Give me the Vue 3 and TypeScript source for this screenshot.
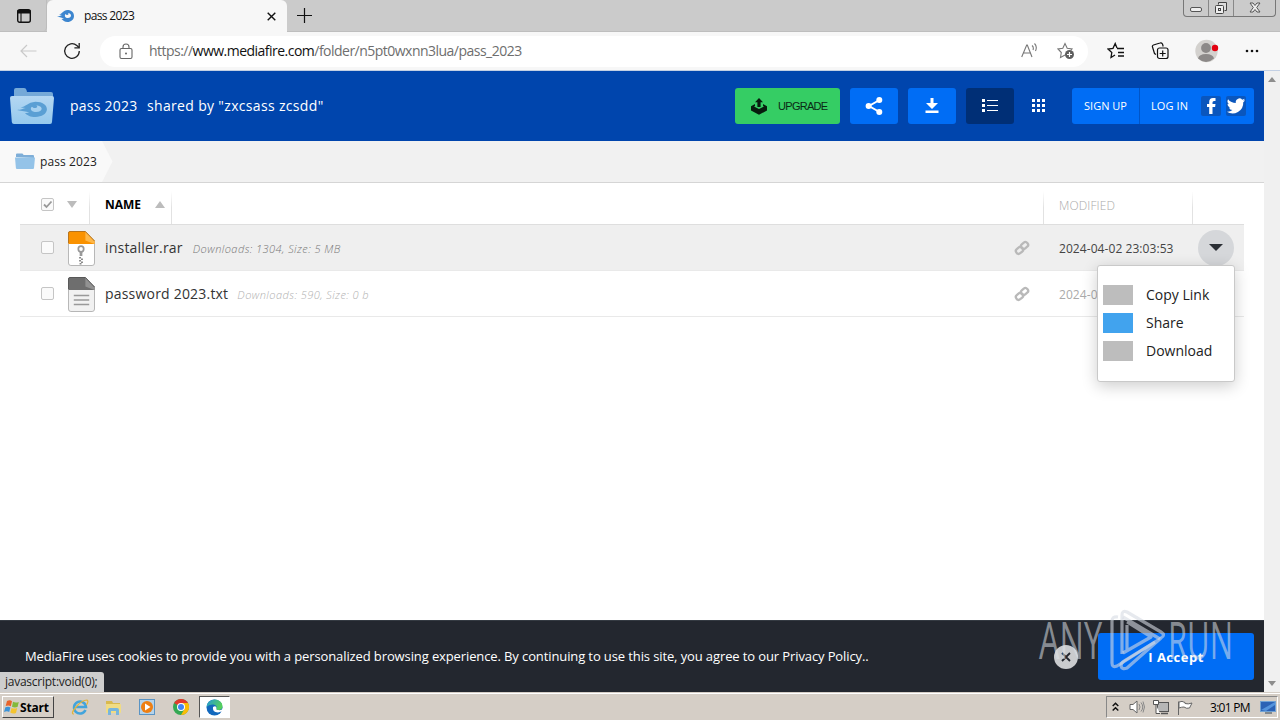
<script setup lang="ts">
interface FileRow {
  name: string
  meta: string
  modified: string
  kind: 'rar' | 'txt'
  active: boolean
}

interface MenuEntry {
  label: string
  highlighted: boolean
}

const files: FileRow[] = [
  { name: 'installer.rar', meta: 'Downloads: 1304, Size: 5 MB', modified: '2024-04-02 23:03:53', kind: 'rar', active: true },
  { name: 'password 2023.txt', meta: 'Downloads: 590, Size: 0 b', modified: '2024-0', kind: 'txt', active: false },
]

const menu: MenuEntry[] = [
  { label: 'Copy Link', highlighted: false },
  { label: 'Share', highlighted: true },
  { label: 'Download', highlighted: false },
]
</script>

<template>
  <div class="screen">
    <div class="tabstrip">
      <div class="tab-actions">
        <svg width="16" height="16" viewBox="0 0 16 16"><rect x="1.7" y="1.7" width="12.6" height="12.6" rx="2" fill="none" stroke="#111" stroke-width="1.4" /><path d="M1.5 2h13v3.5h-13z" fill="#111" /><path d="M5 5v9" stroke="#111" stroke-width="1.1" /></svg>
      </div>
      <div class="tab">
        <svg class="tab-logo" width="17" height="14" viewBox="0 0 34 26"><path fill="#3d86cf" fill-rule="evenodd" d="M0 14C5 14 6 12 10 11L4 10C10 9 12 2 21 1C29 1 34 6 34 13C34 20 28 25 21 25C15 25 12 22 9 19L14 18C10 16 6 16 0 14ZM17 9C15 11 15 16 20 17C25 18 28 15 28 12C28 9 25 7 22 7C24 9 23 11 20 11C19 11 18 10 17 9Z" /></svg>
        <span class="tab-title">pass 2023</span>
        <svg class="tab-close" width="9" height="9" viewBox="0 0 9 9"><path d="M.7.7l7.6 7.6M8.3.7L.7 8.3" stroke="#111" stroke-width="1.4" /></svg>
      </div>
      <svg class="new-tab" width="15" height="15" viewBox="0 0 15 15"><path d="M7.5 0v15M0 7.5h15" stroke="#111" stroke-width="1.2" /></svg>
      <div class="window-buttons">
        <span class="wb"><svg width="12" height="12"><rect x=".5" y="5.5" width="11" height="4" rx="1.5" fill="#eee" stroke="#555" /></svg></span>
        <span class="wb"><svg width="14" height="14"><path d="M4.500 3.500V1.500h8v8h-2" fill="#ddd" stroke="#444" /><rect x="1.500" y="4.500" width="8" height="8" rx="1" fill="#eee" stroke="#444" /><rect x="4.500" y="7.500" width="2" height="2" fill="none" stroke="#444" /></svg></span>
        <span class="wb wide"><svg width="12" height="12"><path d="M1 1h3l2 2.500L8 1h3L7.700 5.500 11 10H8L6 7.500 4 10H1l3.300-4.500z" fill="#eee" stroke="#555" /></svg></span>
      </div>
    </div>

    <div class="toolbar">
      <svg class="back" width="17" height="14" viewBox="0 0 17 14"><path d="M16.500 7H1M7 1L1 7l6 6" fill="none" stroke="#c9c9c9" stroke-width="1.200" /></svg>
      <svg class="reload" width="18" height="18" viewBox="0 0 18 18"><path d="M16.300 9a7.300 7.300 0 1 1-2.500-5.500L16 5.500" fill="none" stroke="#222" stroke-width="1.300" /><path d="M16.200 1v4.800h-4.800" fill="none" stroke="#222" stroke-width="1.300" /></svg>
      <div class="address">
        <svg class="lock" width="14" height="17" viewBox="0 0 14 17"><rect x="1" y="5.500" width="12" height="10" rx="1.500" fill="none" stroke="#666" stroke-width="1.100" /><path d="M4 5.500V4a3 3 0 0 1 6 0v1.500" fill="none" stroke="#666" stroke-width="1.100" /><circle cx="7" cy="10.500" r="1" fill="#666" /></svg>
        <span class="url">https://<b>www.mediafire.com</b>/folder/n5pt0wxnn3lua/pass_2023</span>
        <svg class="read" width="17" height="16" viewBox="0 0 17 16"><path d="M.700 14L5.700 2h.600L11 14M2.500 10h7M11 2.500q2 1.500 1 4.500M13.500.500q3 3 1 7.500" fill="none" stroke="#777" stroke-width="1.100" /></svg>
        <svg class="star" width="18" height="18" viewBox="0 0 18 18"><path d="M8 13l-4.500 2.500.800-5L1 7l4.800-.700L8 1.500l2.200 4.800L15 7l-1 1.200" fill="none" stroke="#777" stroke-width="1.100" /><circle cx="12.500" cy="12.500" r="4.500" fill="#5d5d5d" /><path d="M12.500 10v5M10 12.500h5" stroke="#fff" stroke-width="1.200" /></svg>
      </div>
      <svg class="fav" width="18" height="18" viewBox="0 0 18 18"><path d="M8 13l-4 2.500.800-5L1 7l5-.700L8.200 1.500 10 6M10 6.500h7M11 10.500h6M11 14h6" fill="none" stroke="#111" stroke-width="1.300" /></svg>
      <svg class="coll" width="18" height="18" viewBox="0 0 18 18"><path d="M5 12.500l-1.500-1L1.500 5q-.500-1.500 1-2L9 1q1.500-.500 2.500 1l.700 2.500" fill="none" stroke="#111" stroke-width="1.200" /><rect x="6.500" y="6" width="10.500" height="10.500" rx="2" fill="#f7f7f7" stroke="#111" stroke-width="1.200" /><path d="M11.700 8.500v6M8.700 11.500h6" stroke="#111" stroke-width="1.200" /></svg>
      <svg class="avatar" width="24" height="24" viewBox="0 0 24 24"><circle cx="11.500" cy="12" r="11.200" fill="#d3d1ce" /><circle cx="11" cy="9" r="4.900" fill="#8c8988" /><path d="M3 19.500Q4 15 11 15t8 4.500Q15 23 11 23T3 19.500z" fill="#8c8988" /><circle cx="20" cy="9" r="3.200" fill="#e3000f" /></svg>
      <svg class="dots" width="14" height="4"><circle cx="2" cy="2" r="1.300" fill="#111" /><circle cx="7" cy="2" r="1.300" fill="#111" /><circle cx="12" cy="2" r="1.300" fill="#111" /></svg>
    </div>

    <div class="viewport">
      <div class="page">
        <header class="header">
          <svg class="brand" width="46" height="38" viewBox="0 0 46 38">
            <defs><linearGradient id="folderFront" x1="0" y1="0" x2="0" y2="1"><stop offset="0" stop-color="#b4d7f2" /><stop offset="1" stop-color="#95c9ed" /></linearGradient></defs>
            <path d="M5 10V3q0-2 2-2h8q2 0 2.500 2l.500 2h24q2 0 2 2v3z" fill="#75a9d8" />
            <path d="M3 9h40q2 0 2 2l-2 24q0 2-2 2H5q-2 0-2.200-2L1 11q0-2 2-2z" fill="url(#folderFront)" />
            <path transform="translate(8 14) scale(.88 .64)" fill="#5a9fd4" fill-rule="evenodd" d="M0 14C5 14 6 12 10 11L4 10C10 9 12 2 21 1C29 1 34 6 34 13C34 20 28 25 21 25C15 25 12 22 9 19L14 18C10 16 6 16 0 14ZM17 9C15 11 15 16 20 17C25 18 28 15 28 12C28 9 25 7 22 7C24 9 23 11 20 11C19 11 18 10 17 9Z" />
          </svg>
          <span class="folder-name">pass 2023</span>
          <span class="shared-by">shared by "zxcsass zcsdd"</span>
          <div class="header-actions">
            <button class="upgrade">
              <svg width="18" height="17" viewBox="0 0 18 17"><path d="M9 0l4 4.200h-2.400V9H7.400V4.200H5z" fill="#071c0e" /><path d="M1 8.200l4-2.200v2L4 8.600 9 11l5-2.400-1-.600V6l4 2.200v4.300L9 16.800 1 12.500z" fill="#071c0e" /></svg>
              <span>UPGRADE</span>
            </button>
            <button class="square"><svg width="18" height="20" viewBox="0 0 18 20"><path d="M14.500 4L4 10l10.500 6" fill="none" stroke="#fff" stroke-width="2" /><circle cx="14.300" cy="4" r="3" fill="#fff" /><circle cx="3.600" cy="10" r="3" fill="#fff" /><circle cx="14.300" cy="16" r="3" fill="#fff" /></svg></button>
            <button class="square"><svg width="14" height="16" viewBox="0 0 14 16"><path d="M5.500 0h3v5H13L7 11 1 5h4.500zM.500 12.500h13V15H.500z" fill="#fff" /></svg></button>
            <button class="square selected"><svg width="16" height="14" viewBox="0 0 16 14"><path d="M0 0h3v3H0zM0 5h3v3H0zM0 10h3v3H0zM5 1h11v1H5zM5 6h11v1H5zM5 11h11v1H5z" fill="#fff" /></svg></button>
            <button class="square plain"><svg width="14" height="14" viewBox="0 0 14 14"><path d="M0 0h3v3H0zM5 0h3v3H5zM10 0h3v3h-3zM0 5h3v3H0zM5 5h3v3H5zM10 5h3v3h-3zM0 10h3v3H0zM5 10h3v3H5zM10 10h3v3h-3z" fill="#fff" /></svg></button>
            <div class="account">
              <span class="signup">SIGN UP</span>
              <span class="login">LOG IN</span>
              <span class="social"><svg width="20" height="20" viewBox="0 0 20 20"><path d="M8.200 18v-7H6V8h2.200V6Q8.200 2 12 2h2.500v3H13q-1.500 0-1.500 1.500V8h3l-.400 3h-2.600v7z" fill="#fff" /></svg></span>
              <span class="social"><svg width="20" height="20" viewBox="0 0 24 24"><path d="M23 5.100a9 9 0 0 1-2.600.700 4.500 4.500 0 0 0 2-2.500 9 9 0 0 1-2.900 1.100 4.500 4.500 0 0 0-7.700 4.100A12.800 12.800 0 0 1 2.500 3.800a4.500 4.500 0 0 0 1.400 6 4.500 4.500 0 0 1-2-.600 4.500 4.500 0 0 0 3.600 4.500 4.500 4.500 0 0 1-2 .100 4.500 4.500 0 0 0 4.200 3.100A9 9 0 0 1 1 18.800a12.800 12.800 0 0 0 19.700-11.400A9 9 0 0 0 23 5.100z" fill="#fff" /></svg></span>
            </div>
          </div>
        </header>

        <nav class="crumbs">
          <div class="crumb">
            <svg width="20" height="17" viewBox="0 0 20 17"><path d="M1 4V1.500Q1 .500 2 .500h5q1 0 1.300 1L8.500 2H18q1 0 1 1v2z" fill="#7eaed8" /><path d="M0 4.500h20L19 15q0 1-1 1H2q-1 0-1.100-1z" fill="#94c3e8" /></svg>
            <span>pass 2023</span>
          </div>
          <svg class="crumb-tip" width="13" height="41" viewBox="0 0 13 41"><path d="M0 0h1l10.500 20.500L1 41H0z" fill="#f9f9f9" /></svg>
        </nav>

        <main class="list">
          <div class="list-head">
            <div class="h-check">
              <span class="box"><svg width="11" height="11" viewBox="0 0 11 11"><path d="M2 5.500L4.500 8 9.500 2.500" fill="none" stroke="#999" stroke-width="1.800" /></svg></span>
              <svg class="down" width="10" height="7"><path d="M0 0h10L5 7z" fill="#bcbcbc" /></svg>
            </div>
            <div class="h-name"><span>NAME</span><svg width="10" height="7"><path d="M0 7h10L5 0z" fill="#bcbcbc" /></svg></div>
            <div class="h-modified">MODIFIED</div>
            <div class="h-more"></div>
          </div>
          <div v-for="file in files" :key="file.name" class="row" :class="{ active: file.active }">
            <span class="box"></span>
            <svg class="file-icon" width="27" height="35" viewBox="0 0 28 35" preserveAspectRatio="none">
              <path d="M2.500.500H18L27.500 10v22q0 2.500-2.500 2.500H3Q.500 34.500.500 32V2.500q0-2 2-2z" :fill="file.kind === 'rar' ? '#fff' : '#f1f1f1'" stroke="#b5b5b5" />
              <path d="M2 .500h16L27.500 10v3H.500V2Q.500.500 2 .500z" :fill="file.kind === 'rar' ? '#fa9200' : '#6e6e6e'" />
              <path d="M18 .500L27.500 10v3L18 9.500z" :fill="file.kind === 'rar' ? '#ffb848' : '#929292'" />
              <path d="M.500 12V2Q.500.500 2 .500h16L27.500 10" fill="none" :stroke="file.kind === 'rar' ? '#b7731b' : '#575757'" />
              <g v-if="file.kind === 'rar'">
                <circle cx="13.500" cy="18" r="2.800" fill="none" stroke="#999" stroke-width="1.800" />
                <path d="M13.500 20.500v4.500" stroke="#999" stroke-width="2.800" />
                <path d="M11.500 26h2v1.500h-2zM13.500 27.500h2V29h-2zM11.500 29h2v1.500h-2zM13.500 30.500h2V32h-2zM12 32h2v1.500h-2z" fill="#888" />
              </g>
              <path v-else d="M6 18.500h16M6 23h16M6 27.500h16" stroke="#999" stroke-width="1.500" />
            </svg>
            <span class="file-name">{{ file.name }}</span>
            <span class="file-meta" :class="file.kind">{{ file.meta }}</span>
            <svg class="link" width="16" height="16" viewBox="0 0 16 16"><g fill="none" stroke="#b9b9b9" stroke-width="2.300"><rect x="6.700" y="2.800" width="7.600" height="5.400" rx="2.500" transform="rotate(-40 10.500 5.500)" /><rect x="1.700" y="7.600" width="7.600" height="5.400" rx="2.500" transform="rotate(-40 5.500 10.300)" /></g></svg>
            <span class="date">{{ file.modified }}</span>
            <span v-if="file.active" class="more"><svg width="14" height="7"><path d="M0 0h14L7 7z" fill="#2b2f35" /></svg></span>
          </div>
        </main>

        <div class="cookie">
          <span class="cookie-text">MediaFire uses cookies to provide you with a personalized browsing experience. By continuing to use this site, you agree to our Privacy Policy..</span>
          <span class="dismiss"><svg width="10" height="10" viewBox="0 0 10 10"><path d="M1 1l8 8M9 1L1 9" stroke="#22262e" stroke-width="1.800" /></svg></span>
          <button class="accept">I Accept</button>
        </div>
      </div>
      <div class="scrollbar">
        <svg width="8" height="5"><path d="M0 5h8L4 0z" fill="#8d8d8d" /></svg>
        <svg width="8" height="5"><path d="M0 0h8L4 5z" fill="#8d8d8d" /></svg>
      </div>
    </div>

    <div class="taskbar">
      <div class="start">
        <svg width="16" height="16" viewBox="0 0 16 16"><path d="M3 2q3-1.500 5 .200L6.800 7.200Q4.500 6 1.700 7z" fill="#e8632b" /><path d="M9 2.700q2.500 1.500 5.800.200L13.500 8q-3 1-5.500-.300z" fill="#83b93c" /><path d="M1.400 8.200q3-1.200 5 .200L5.200 13Q3 11.700 0 13z" fill="#3b93d8" /><path d="M7.600 8.900q2.500 1.300 5.600.200L12 14q-3 1.200-5.700-.400z" fill="#f4c430" /></svg>
        <span>Start</span>
      </div>
      <svg class="ie" width="18" height="18" viewBox="0 0 18 18"><path d="M14.500 12A6 6 0 1 1 15 9H5" fill="none" stroke="#42a4dc" stroke-width="2.500" /><path d="M3 16Q-1 16 5 9T16 2q2 1-.500 5" fill="none" stroke="#e2b43b" stroke-width="1.200" /></svg>
      <svg class="explorer" width="17" height="17" viewBox="0 0 17 17"><path d="M1 5V2h6l1 2h7v3z" fill="#d9b94e" /><rect x="1" y="5" width="15" height="9" rx="1" fill="#f1dc83" /><path d="M3 16v-5q0-2 2-2h7q2 0 2 2v5h-3v-4H6v4z" fill="#78b5dc" /></svg>
      <svg class="player" width="16" height="16" viewBox="0 0 16 16"><rect x=".500" y=".500" width="15" height="15" fill="#b5d3ea" stroke="#5a94c4" /><circle cx="8" cy="8" r="6" fill="#ee7f13" /><path d="M6 4.500l5.500 3.500L6 11.500z" fill="#fff" /></svg>
      <svg class="chrome" width="16" height="16" viewBox="0 0 16 16"><circle cx="8" cy="8" r="8" fill="#34a853" /><path d="M8 8L1.100 4A8 8 0 0 1 15 4z" fill="#e3392c" /><path d="M8 4h7a8 8 0 0 1-7 12l3.500-6z" fill="#fbbc05" /><circle cx="8" cy="8" r="4" fill="#fff" /><circle cx="8" cy="8" r="3" fill="#4285f4" /></svg>
      <div class="edge">
        <svg width="17" height="17" viewBox="0 0 17 17"><defs><linearGradient id="edgeWave" x1="0" y1="0" x2="1" y2=".4"><stop offset="0" stop-color="#2498d8" /><stop offset="1" stop-color="#55cf5b" /></linearGradient></defs><circle cx="8.500" cy="8.500" r="8" fill="#1268bd" /><path d="M.500 8Q1 1 8.500.500 16 1 16.500 7q0 4-4 4-3 0-2-2 .500-3-3-3.500Q3 5 .500 8z" fill="url(#edgeWave)" /><path d="M7 8q-1 5 5 5.500l3.500-1L17 14v-4q-2 1.500-4.500 1-3 0-2-2Q10 6 7 8z" fill="#fff" /></svg>
      </div>
      <div class="tray">
        <svg class="chev" width="7" height="10" viewBox="0 0 7 10"><path d="M.700 4L3.500 1.300 6.300 4M.700 8.500l2.800-2.700 2.800 2.700" fill="none" stroke="#111" stroke-width="1.500" /></svg>
        <svg class="sound" width="16" height="14" viewBox="0 0 16 14"><path d="M1 4.500h3L8 1v12L4 9.500H1z" fill="#fff" stroke="#666" /><path d="M10 4q2 3 0 6M12 2.500q3.500 4.500 0 9M14 1.500q3 5.500 0 11" fill="none" stroke="#888" /></svg>
        <svg class="net" width="16" height="16" viewBox="0 0 16 16"><rect x="4.500" y="3.500" width="11" height="9" fill="#b6b6b6" stroke="#555" /><path d="M8 14.500h7" stroke="#555" stroke-width="1.500" /><path d="M.500 1.500h5v4h-5zM3 6v8.500h4" fill="#fff" stroke="#555" /></svg>
        <svg class="flag" width="16" height="15" viewBox="0 0 16 15"><path d="M1.500 15V1.500M2 2q3-1.500 6 .500v1q3 1 7-.500l-2.500 5q-3 1-5.500-1Q4.500 7 2 8z" fill="#fff" stroke="#666" /></svg>
        <span class="clock">3:01 PM</span>
        <svg class="desktop" width="16" height="14" viewBox="0 0 16 14"><rect x=".500" y="1.500" width="15" height="10" fill="#2c62b5" stroke="#71a2d4" /><path d="M1 10L15 2v3L6 11z" fill="#5594dc" /><path d="M5 13h7" stroke="#345" /></svg>
      </div>
    </div>

    <div class="context-menu">
      <div v-for="entry in menu" :key="entry.label" class="entry">
        <span class="swatch" :class="{ on: entry.highlighted }"></span>
        <span class="entry-label">{{ entry.label }}</span>
      </div>
    </div>
    <div class="status">javascript:void(0);</div>
    <svg class="watermark" width="200" height="66" viewBox="0 0 200 66">
      <g fill="#dfe3e8" fill-opacity=".55" font-family="'Open Sans', sans-serif" font-weight="400" font-size="52">
        <text x="4" y="52" textLength="63" lengthAdjust="spacingAndGlyphs">ANY</text>
        <text x="133" y="52" textLength="65" lengthAdjust="spacingAndGlyphs">RUN</text>
      </g>
      <g fill="none" stroke="#d5dae2" stroke-opacity=".6" stroke-width="3.200" stroke-linejoin="round">
        <path d="M83 10q-6-1-6 4v42q0 5 5 3l38-24" />
        <path d="M87 47V8q0-5 5-3l34 20q5 3 0 6L92 61q-5 2-6-2 0-3 3-5l34-21" />
        <path d="M88 10l37 22M92 43V18M88 46l28-16L92 15" />
      </g>
    </svg>
  </div>
</template>

<style>
html,
body {
  margin: 0;
  overflow: hidden;
}
</style>

<style scoped>
.screen {
  position: relative;
  display: flex;
  flex-direction: column;
  width: 1280px;
  height: 720px;
  overflow: hidden;
  background: #fff;
  color: #222;
  font-family: 'Open Sans', 'Noto Sans', sans-serif;
}
svg { display: block; flex: none; }
span { white-space: pre; }
button { border: 0; padding: 0; margin: 0; font-family: inherit; }

.tabstrip { display: flex; height: 32px; background: #cbcbcb; box-shadow: inset 0 -1px #bebebe; flex: none; }
.tab-actions { width: 47px; height: 31px; box-sizing: border-box; padding: 8px 0 0 16px; border-right: 1px solid #bdbdbd; border-bottom-right-radius: 4px; }
.tab { display: flex; align-items: center; width: 240px; height: 32px; background: #f7f7f7; border-radius: 6px 6px 0 0; }
.tab-logo { margin-left: 10px; }
.tab-title { margin-left: 10px; width: 183px; font-size: 12px; line-height: 30px; letter-spacing: -0.65px; color: #111; }
.new-tab { margin: 8px 0 0 10px; }
.window-buttons { display: flex; height: 16px; margin: 0 4px 0 auto; border: 1px solid #777; border-top: 0; border-radius: 0 0 4px 4px; }
.wb { display: flex; align-items: center; justify-content: center; width: 24px; }
.wb + .wb { border-left: 1px solid #888; }
.wb.wide { width: 41px; }

.toolbar { display: flex; align-items: center; height: 38px; flex: none; background: #f7f7f7; border-bottom: 1px solid #c3d0e4; }
.back { margin-left: 20px; }
.reload { margin-left: 26px; }
.address { display: flex; align-items: center; width: 988px; height: 31px; margin-left: 19px; border-radius: 16px; background: #fff; }
.lock { margin-left: 19px; }
.url { margin-left: 16px; width: 872px; font-size: 14px; line-height: 28px; letter-spacing: -0.52px; color: #6e6e6e; }
.url b { color: #111; font-weight: 400; }
.star { margin-left: 19px; }
.fav { margin-left: 19px; }
.coll { margin-left: 26px; }
.avatar { margin-left: 26px; }
.dots { margin-left: 26px; }

.viewport { display: flex; height: 621px; flex: none; }
.page { display: flex; flex-direction: column; width: 1264px; }
.scrollbar { display: flex; flex-direction: column; justify-content: space-between; align-items: center; width: 16px; padding: 6px 0; box-sizing: border-box; background: #f0f0f0; }

.header { display: flex; align-items: center; height: 70px; flex: none; background: #0045ad; color: #fff; }
.brand { margin-left: 9px; }
.folder-name { margin-left: 15px; width: 77px; padding-bottom: 2px; font-size: 14px; letter-spacing: 0.25px; }
.shared-by { padding-bottom: 2px; font-size: 14px; letter-spacing: 0.33px; }
.header-actions { display: flex; margin: 0 10px 0 auto; }
.upgrade { display: flex; align-items: center; width: 105px; height: 36px; background: #35cd64; border-radius: 3px; color: #0b2a14; font-family: 'Liberation Sans', Arial, sans-serif; font-size: 11px; letter-spacing: -0.7px; }
.upgrade svg { margin: 0 10px 0 15px; }
.square { display: flex; align-items: center; justify-content: center; width: 48px; height: 36px; margin-left: 10px; border-radius: 3px; background: #006df5; }
.square.selected { background: #002f76; }
.square.plain { margin-left: 0; padding-left: 2px; box-sizing: border-box; background: none; }
.account { display: flex; align-items: center; width: 182px; height: 36px; margin-left: 10px; border-radius: 3px; background: #006df5; font-size: 11px; }
.signup { width: 67px; line-height: 36px; text-align: center; border-right: 1px solid #0055c8; }
.login { width: 61px; padding: 0 2px 2px 0; box-sizing: border-box; text-align: center; letter-spacing: 0.1px; }
.social { width: 20px; height: 20px; background: #0a56bd; border-radius: 2px; }
.social + .social { margin-left: 5px; }

.crumbs { display: flex; height: 41px; flex: none; background: #f1f1f1; border-bottom: 1px solid #d5d5d5; }
.crumb { display: flex; align-items: center; width: 101px; background: #f9f9f9; font-size: 12px; letter-spacing: 0.1px; }
.crumb svg { margin: 0 5px 0 15px; }

.list { flex: 1; padding: 0 20px; }
.list-head { display: flex; height: 41px; border-bottom: 1px solid #dedede; font-size: 12px; }
.list-head > div { box-sizing: border-box; padding-top: 2px; background: linear-gradient(to bottom, #fff 20%, #e2e2e2 60%) right / 1px 100% no-repeat; }
.h-check { display: flex; align-items: center; width: 70px; }
.box { display: block; box-sizing: border-box; width: 13px; height: 13px; margin-left: 21px; border: 1px solid #c5c5c5; border-radius: 2px; background: #fafafa; flex: none; }
.down { margin-left: 13px; }
.h-name { display: flex; align-items: center; width: 82px; padding-left: 15px; color: #000; font-weight: 700; }
.h-name span { width: 50px; }
.list-head > .h-modified { width: 150px; margin-left: auto; padding-left: 16px; line-height: 41px; background: linear-gradient(to bottom, #fff 20%, #e2e2e2 60%) left / 1px 100% no-repeat; color: #aaa; font-weight: 300; letter-spacing: 0.1px; }
.list-head > .h-more { width: 52px; margin-left: -1px; background: linear-gradient(to bottom, #fff 20%, #e2e2e2 60%) left / 1px 100% no-repeat; }
.row { display: flex; align-items: center; height: 45px; border-bottom: 1px solid #e9e9e9; }
.row.active { background: #efefef; }
.file-icon { margin: 1px 0 0 14px; }
.file-name { margin-left: 10px; font-size: 14px; letter-spacing: 0.2px; color: #333; }
.file-meta { margin: 2px 0 0 10px; font-size: 11px; font-style: italic; font-weight: 300; letter-spacing: 0.45px; color: #b0b0b0; }
.file-meta.txt { margin-left: 9px; }
.active .file-meta { color: #777; }
.link { margin-left: auto; }
.date { width: 139px; margin-left: 29px; padding-top: 1px; font-size: 12px; letter-spacing: 0.07px; color: #aaa; margin-right: 46px; box-sizing: border-box; }
.active .date { margin-right: 0; color: #444; }
.more { display: flex; align-items: center; justify-content: center; width: 36px; height: 36px; margin-right: 10px; border-radius: 50%; background: #d5d7da; }

.cookie { display: flex; align-items: center; height: 72px; flex: none; background: #23272f; color: #fff; box-sizing: border-box; border-top: 1px solid #343a42; }
.cookie-text { width: 1029px; padding: 0 0 2px 25px; box-sizing: border-box; font-size: 13px; letter-spacing: -0.112px; }
.dismiss { display: flex; align-items: center; justify-content: center; width: 24px; height: 24px; margin-left: 25px; border-radius: 50%; background: #c9cbce; }
.accept { width: 156px; height: 47px; margin-left: 20px; border-radius: 3px; background: #006df5; color: #fff; font-size: 13px; font-weight: 700; letter-spacing: 0.5px; }

.taskbar { display: flex; align-items: center; height: 28px; flex: none; background: #d5cec6; box-shadow: inset 0 1px #d5cec6, inset 0 2px #fff; box-sizing: border-box; padding-top: 2px; }
.start { display: flex; align-items: center; box-sizing: border-box; width: 52px; height: 22px; margin-left: 2px; padding-left: 1px; border: 1px solid #fff; border-right-color: #444; border-bottom-color: #444; font-size: 12px; font-weight: 700; color: #000; letter-spacing: -0.2px; }
.ie { margin-left: 17px; }
.explorer { margin-left: 16px; }
.player { margin-left: 17px; }
.chrome { margin-left: 18px; }
.edge { display: flex; align-items: center; justify-content: center; box-sizing: border-box; width: 31px; height: 22px; margin-left: 10px; border: 1px solid #555; border-right-color: #fff; border-bottom-color: #fff; background: #fff; }
.tray { display: flex; align-items: center; box-sizing: border-box; width: 172px; height: 22px; margin: 0 2px 0 auto; border: 1px solid #888; border-right-color: #fff; border-bottom-color: #fff; }
.chev { margin-left: 5px; }
.sound { margin-left: 10px; }
.net { margin-left: 8px; }
.flag { margin-left: 8px; }
.clock { width: 50px; margin-left: 17px; font-size: 12px; letter-spacing: -0.7px; color: #000; }

.context-menu { position: absolute; left: 1097px; top: 265px; box-sizing: border-box; width: 138px; height: 117px; padding: 15px 0 0 5px; border: 1px solid #c9c9c9; border-radius: 3px; background: #fff; box-shadow: 0 4px 16px rgba(0, 0, 0, 0.2); }
.entry { display: flex; align-items: center; height: 28px; font-size: 14px; color: #222; }
.entry-label { padding-bottom: 2px; }
.swatch { width: 30px; height: 20px; margin-right: 13px; background: #bdbdbd; }
.swatch.on { background: #41a3ee; }
.status { position: absolute; left: 0; top: 672px; width: 104px; height: 20px; box-sizing: border-box; padding-left: 5px; border-top-right-radius: 3px; background: #cecece; color: #222; font-size: 12px; line-height: 20px; letter-spacing: -0.25px; white-space: nowrap; }
.watermark { position: absolute; left: 1035px; top: 607px; pointer-events: none; }
</style>
